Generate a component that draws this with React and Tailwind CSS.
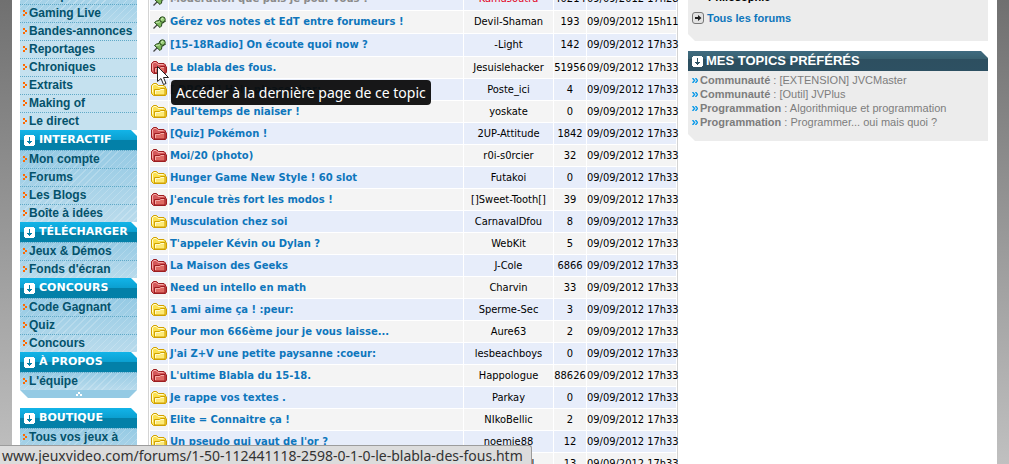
const sidebar = [
  {
    title: null,
    items: ["Musique", "Gaming Live", "Bandes-annonces", "Reportages", "Chroniques", "Extraits", "Making of", "Le direct"],
  },
  { title: "INTERACTIF", items: ["Mon compte", "Forums", "Les Blogs", "Boîte à idées"] },
  { title: "TÉLÉCHARGER", items: ["Jeux & Démos", "Fonds d'écran"] },
  { title: "CONCOURS", items: ["Code Gagnant", "Quiz", "Concours"] },
  { title: "À PROPOS", items: ["L'équipe"] },
];

const topics = [
  ["pin", "Modération que puis je pour vous ?", "Kamasoutra", "40214", "09/09/2012 17h28"],
  ["pin", "Gérez vos notes et EdT entre forumeurs !", "Devil-Shaman", "193", "09/09/2012 15h11"],
  ["pin", "[15-18Radio] On écoute quoi now ?", "-Light", "142", "09/09/2012 17h33"],
  ["red", "Le blabla des fous.", "Jesuislehacker", "51956", "09/09/2012 17h33"],
  ["yellow", "[ DROIT ] Help please :bar:", "Poste_ici", "4", "09/09/2012 17h33"],
  ["yellow", "Paul'temps de niaiser !", "yoskate", "0", "09/09/2012 17h33"],
  ["red", "[Quiz] Pokémon !", "2UP-Attitude", "1842", "09/09/2012 17h33"],
  ["red", "Moi/20 (photo)", "r0i-s0rcier", "32", "09/09/2012 17h33"],
  ["yellow", "Hunger Game New Style ! 60 slot", "Futakoi", "0", "09/09/2012 17h33"],
  ["red", "J'encule très fort les modos !", "[]Sweet-Tooth[]", "39", "09/09/2012 17h33"],
  ["yellow", "Musculation chez soi", "CarnavalDfou", "8", "09/09/2012 17h33"],
  ["yellow", "T'appeler Kévin ou Dylan ?", "WebKit", "5", "09/09/2012 17h33"],
  ["red", "La Maison des Geeks", "J-Cole", "6866", "09/09/2012 17h33"],
  ["red", "Need un intello en math", "Charvin", "33", "09/09/2012 17h33"],
  ["yellow", "1 ami aime ça ! :peur:", "Sperme-Sec", "3", "09/09/2012 17h33"],
  ["yellow", "Pour mon 666ème jour je vous laisse...", "Aure63", "2", "09/09/2012 17h33"],
  ["yellow", "J'ai Z+V une petite paysanne :coeur:", "lesbeachboys", "0", "09/09/2012 17h33"],
  ["red", "L'ultime Blabla du 15-18.", "Happologue", "88626", "09/09/2012 17h33"],
  ["yellow", "Je rappe vos textes .", "Parkay", "0", "09/09/2012 17h33"],
  ["yellow", "Elite = Connaitre ça !", "NIkoBellic", "2", "09/09/2012 17h33"],
  ["yellow", "Un pseudo qui vaut de l'or ?", "noemie88", "12", "09/09/2012 17h33"],
  ["yellow", "", "DarkAngel", "13", "09/09/2012 17h33"],
];

const favourites = [
  ["Communauté", "[EXTENSION] JVCMaster"],
  ["Communauté", "[Outil] JVPlus"],
  ["Programmation", "Algorithmique et programmation"],
  ["Programmation", "Programmer... oui mais quoi ?"],
];

function DownIcon({ color }) {
  return (
    <svg width="11" height="11" viewBox="0 0 11 11" shapeRendering="crispEdges" className="shrink-0" aria-hidden="true">
      <path d="M1 0h9v1h1v9h-1v1H1v-1H0V1h1z" fill="#fff" />
      <path d="M5 2h1v4h2v1H7v1H6v1H5V8H4V7H3V6h2z" fill={color} />
    </svg>
  );
}

function Bullet() {
  return (
    <svg width="4" height="6" viewBox="0 0 4 6" shapeRendering="crispEdges" className="mr-0.5 shrink-0" aria-hidden="true">
      <path d="M0 0h2v2H0zM2 2h2v2H2zM0 4h2v2H0z" fill="#ff6a00" />
    </svg>
  );
}

function Folder({ kind }) {
  const red = kind === "red";
  const edge = red ? "#9c1d20" : "#d0a000";
  const back = red ? "#d4585a" : "#fbe04e";
  const front = red ? "#de6a63" : "#fdea78";
  const light = red ? "#f4aaa5" : "#fffbd0";
  return (
    <svg width="16" height="13" viewBox="0 0 16 13" aria-hidden="true">
      <path d="M.5 10.500v-8L2.500.500h3l2 2H13L14.500 4v1l1 1v5l-1 1.500H2.500z" fill={back} stroke={edge} />
      <path d="M1.500 9.500V3L3 1.500h2l2 2h5.500" fill="none" stroke={light} />
      <path d="M3.500 12v-5.500h5l1-1h4.500V12z" fill={front} stroke={edge} />
      <path d="M4.500 11V7.500h4.500l1-1h3" fill="none" stroke={light} />
    </svg>
  );
}

function Pin() {
  return (
    <svg width="13" height="13" viewBox="0 0 13 13" aria-hidden="true">
      <path d="M4.500 8.500.500 12.500" stroke="#444" strokeWidth="1.300" />
      <path d="M1.500 6.500 3.500 5l2.500-.5.500-2L8 1l4.500 4-1.500 1.500-2 .5-.5 3L7 11.500z" fill="#7fb95c" stroke="#24451a" />
      <path d="M3 6.500 6.500 6l1.500-2" fill="none" stroke="#c9e8b2" />
      <circle cx="9.500" cy="3.500" r="2.700" fill="#9ad077" stroke="#24451a" />
      <path d="M8.500 3.500c0-.8.500-1.200 1.200-1.200" fill="none" stroke="#e0f5d0" />
    </svg>
  );
}

function MenuTitle({ children }) {
  return (
    <h2 className="flex h-5 items-center gap-1 bg-[linear-gradient(180deg,#12b4e8_0,#0b9fd0_50%,#0380a8_50%,#0380a8_100%)] pl-1 font-['DejaVu_Sans',sans-serif] text-[11px] font-bold text-white [clip-path:polygon(0_0,calc(100%-6px)_0,100%_6px,100%_100%,0_100%)]">
      <DownIcon color="#0380a8" />
      {children}
    </h2>
  );
}

function MenuItem({ children }) {
  return (
    <li className="h-[18px] border-t border-dotted border-[#5fa9c7]">
      <a href="#" className="flex h-4 items-center pl-[3px] text-[12px] leading-4 font-bold whitespace-nowrap text-[#04526b]">
        <Bullet />
        {children}
      </a>
    </li>
  );
}

const stripes =
  "bg-[repeating-linear-gradient(135deg,#ffffff30_0,#ffffff30_1px,transparent_1px,transparent_5px),linear-gradient(180deg,#95cae4,#b9dbec)]";
const fadingStripes =
  "bg-[linear-gradient(180deg,transparent_20px,#c5e1ef_56px),repeating-linear-gradient(135deg,#ffffff40_0,#ffffff40_1px,transparent_1px,transparent_5px),linear-gradient(180deg,#a5d2e8,#a5d2e8)]";

function Sidebar() {
  return (
    <nav className="-mt-[14px] w-[117px] shrink-0">
      {sidebar.map((group) => (
        <section key={group.items[0]}>
          {group.title && <MenuTitle>{group.title}</MenuTitle>}
          <ul className={group.title ? stripes : fadingStripes}>
            {group.items.map((item) => (
              <MenuItem key={item}>{item}</MenuItem>
            ))}
          </ul>
        </section>
      ))}
      <div className="flex h-2 items-center justify-center bg-[#94cae4] [clip-path:polygon(0_0,100%_0,calc(100%-8px)_100%,8px_100%)]">
        <svg width="6" height="4" viewBox="0 0 6 4" shapeRendering="crispEdges" aria-hidden="true">
          <path d="M2 0h2v2H2zM0 2h2v2H0zM4 2h2v2H4z" fill="#fff" />
        </svg>
      </div>
      <section className="mt-[10px]">
        <MenuTitle>BOUTIQUE</MenuTitle>
        <ul className={stripes}>
          <MenuItem>Tous vos jeux à</MenuItem>
          <MenuItem>prix réduits</MenuItem>
        </ul>
      </section>
    </nav>
  );
}

function TopicTable() {
  return (
    <div className="-mt-[13px] ml-[11px] w-[530px] shrink-0 border-x border-[#d4d4d4]">
      <table className="w-full table-fixed border-separate border-spacing-px font-['DejaVu_Sans_Condensed','DejaVu_Sans',sans-serif] text-[11px] leading-4 text-black">
        <colgroup>
          <col className="w-[18px]" />
          <col />
          <col className="w-[89px]" />
          <col className="w-8" />
          <col className="w-[89px]" />
        </colgroup>
        <tbody>
          {topics.map(([kind, title, author, count, date], i) => (
            <tr
              key={date + author}
              className={`${i % 2 ? "bg-[#f4f4f4]" : "bg-[#e7edfa]"} ${kind === "pin" ? "h-[22px]" : "h-[21px]"}`}
            >
              <td className="p-0">
                <div className="flex justify-center">{kind === "pin" ? <Pin /> : <Folder kind={kind} />}</div>
              </td>
              <td
                className={`p-0 pl-px font-['DejaVu_Sans',sans-serif] text-[10px] font-bold whitespace-nowrap ${i ? "text-[#0e76bc]" : "text-[#8b8b8b]"}`}
              >
                <a href="#">{title}</a>
              </td>
              <td className={`p-0 text-center whitespace-nowrap ${i ? "" : "text-[#e2001a]"}`}>{author}</td>
              <td className="p-0 text-center">{count}</td>
              <td className="p-0 text-center whitespace-nowrap">{date}</td>
            </tr>
          ))}
        </tbody>
      </table>
    </div>
  );
}

function RightColumn() {
  return (
    <aside className="ml-[10px] w-[300px] shrink-0">
      <section className="-mt-3 h-[53px] bg-[#ececec] pl-1 [clip-path:polygon(0_0,100%_0,100%_100%,7px_100%,0_calc(100%-7px))]">
        <p className="pl-4 text-[11px] leading-[18px] font-bold text-black">Philosophie</p>
        <a href="#" className="mt-1 flex items-center gap-[3px] text-[11px] font-bold text-[#0e76bc]">
          <svg width="12" height="12" viewBox="0 0 12 12" aria-hidden="true">
            <rect x=".5" y=".5" width="11" height="11" rx="2.500" fill="#e2e2e2" stroke="#777" />
            <path d="M3 5h3V3l3.500 3L6 9V7H3z" fill="#222" />
          </svg>
          Tous les forums
        </a>
      </section>
      <section className="mt-[10px]">
        <h2 className="flex h-5 items-center gap-[3px] bg-[linear-gradient(180deg,#3f6b80_0,#38606f_40%,#2d4f60_40%,#2d5062_100%)] pl-1 text-[13px] font-bold text-white [clip-path:polygon(0_0,calc(100%-7px)_0,100%_7px,100%_100%,0_100%)]">
          <DownIcon color="#2d5062" />
          MES TOPICS PRÉFÉRÉS
        </h2>
        <ul className="bg-[#ececec] pt-[2px] pb-3 pl-1 text-[11px] leading-[14px] text-[#7d7d7d] [clip-path:polygon(0_0,100%_0,100%_100%,7px_100%,0_calc(100%-7px))]">
          {favourites.map(([forum, topic]) => (
            <li key={topic}>
              <a href="#" className="flex items-center gap-[2px] whitespace-nowrap">
                <svg width="6" height="5" viewBox="0 0 6 5" aria-hidden="true">
                  <path d="m.5 0 2 2.500-2 2.500M3.500 0l2 2.500-2 2.500" fill="none" stroke="#0e9ae8" strokeWidth="1.500" />
                </svg>
                <span>
                  <b>{forum}</b> : {topic}
                </span>
              </a>
            </li>
          ))}
        </ul>
      </section>
    </aside>
  );
}

export default function App() {
  return (
    <div className="relative h-screen overflow-hidden bg-[linear-gradient(180deg,#707070,#c0c0c0)] px-3 font-['Liberation_Sans',Arial,sans-serif]">
      <main className="flex h-full items-start bg-white pl-2">
        <Sidebar />
        <TopicTable />
        <RightColumn />
      </main>
      <div
        role="tooltip"
        className="absolute top-20 left-[171px] flex h-[25px] items-center rounded-[4px] bg-[#0c0c0c]/95 px-[5px] font-['Noto_Sans',sans-serif] text-[14px] whitespace-nowrap text-white"
      >
        Accéder à la dernière page de ce topic
      </div>
      <svg className="absolute top-[66px] left-[157px]" width="13" height="20" viewBox="0 0 13 20" aria-hidden="true">
        <path d="M.5.500v15l3.500-3 2.500 6 2.500-1-2.500-6H11.500z" fill="#fff" stroke="#222" />
      </svg>
      <div className="absolute bottom-0 left-0 flex h-[19px] items-center rounded-tr-[3px] border-t border-r border-[#9c9c9c] bg-[#dcdcdc] pr-2 pl-0.5 font-['Noto_Sans',sans-serif] text-[14px] whitespace-nowrap text-[#333]">
        www.jeuxvideo.com/forums/1-50-112441118-2598-0-1-0-le-blabla-des-fous.htm
      </div>
    </div>
  );
}
